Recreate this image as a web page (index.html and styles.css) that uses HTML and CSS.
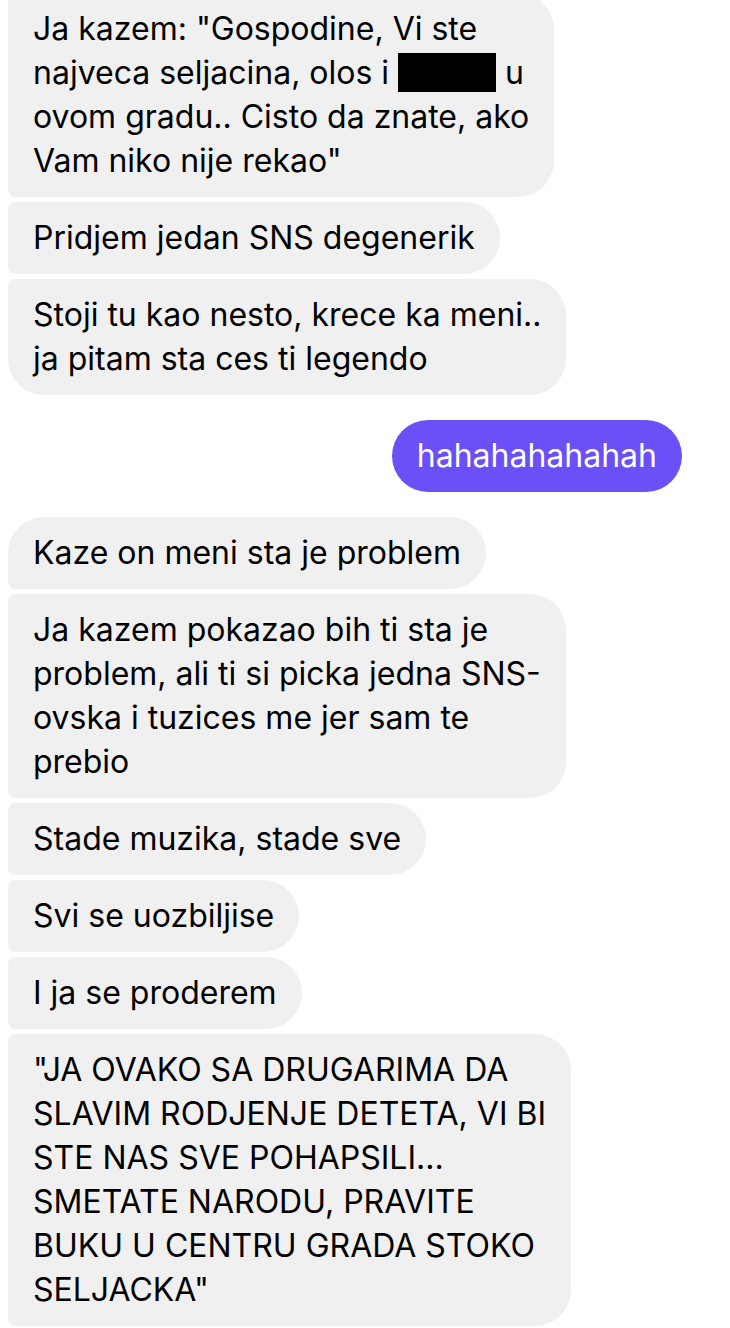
FILE: index.html
```html
<!DOCTYPE html>
<html lang="sr">

<head>
    <meta charset="UTF-8">
    <meta name="viewport" content="width=device-width, initial-scale=1.0">
    <title>Poruke</title>
    <link rel="stylesheet" href="styles.css">
</head>

<body>
    <div class="thread">
        <div class="msg in mid">Ja kazem: "Gospodine, Vi ste<br>najveca seljacina, olos i <span class="redacted"></span> u<br>ovom gradu.. Cisto da znate, ako<br>Vam niko nije rekao"</div>
        <div class="msg in mid">Pridjem jedan SNS degenerik</div>
        <div class="msg in last">Stoji tu kao nesto, krece ka meni..<br>ja pitam sta ces ti legendo</div>

        <div class="msg out">hahahahahahah</div>

        <div class="msg in first">Kaze on meni sta je problem</div>
        <div class="msg in mid">Ja kazem pokazao bih ti sta je<br>problem, ali ti si picka jedna SNS-<br>ovska i tuzices me jer sam te<br>prebio</div>
        <div class="msg in mid">Stade muzika, stade sve</div>
        <div class="msg in mid">Svi se uozbiljise</div>
        <div class="msg in mid">I ja se proderem</div>
        <div class="msg in mid">"JA OVAKO SA DRUGARIMA DA<br>SLAVIM RODJENJE DETETA, VI BI<br>STE NAS SVE POHAPSILI...<br>SMETATE NARODU, PRAVITE<br>BUKU U CENTRU GRADA STOKO<br>SELJACKA"</div>
    </div>
</body>

</html>
```

FILE: styles.css
```css
html, body {
    margin: 0;
    padding: 0;
    background: #ffffff;
    font-family: 'Inter', 'Liberation Sans', sans-serif;
    color: #000000;
}

body {
    overflow: hidden;
    height: 1328px;
}

.thread {
    display: flex;
    flex-direction: column;
    align-items: flex-start;
    gap: 5px;
    padding: 0 8px;
    margin-top: -7px;
}

.msg {
    box-sizing: border-box;
    padding: 14px 25px;
    font-size: 32px;
    line-height: 44px;
    white-space: nowrap;
    border-radius: 36px;
}

/* incoming bubbles: grey, the left corners tighten inside a group */
.msg.in {
    background-color: #f0f0f0;
}

.msg.in.first {
    margin-top: 20px;
    border-bottom-left-radius: 7px;
}

.msg.in.mid {
    border-top-left-radius: 7px;
    border-bottom-left-radius: 7px;
}

.msg.in.last {
    border-top-left-radius: 7px;
}

/* outgoing bubble */
.msg.out {
    align-self: flex-end;
    margin: 20px 40px 0 0;
    background-color: #6b4ff7;
    color: #ffffff;
}

.redacted {
    display: inline-block;
    width: 98px;
    height: 39px;
    background: #000000;
    vertical-align: -8px;
}
```
